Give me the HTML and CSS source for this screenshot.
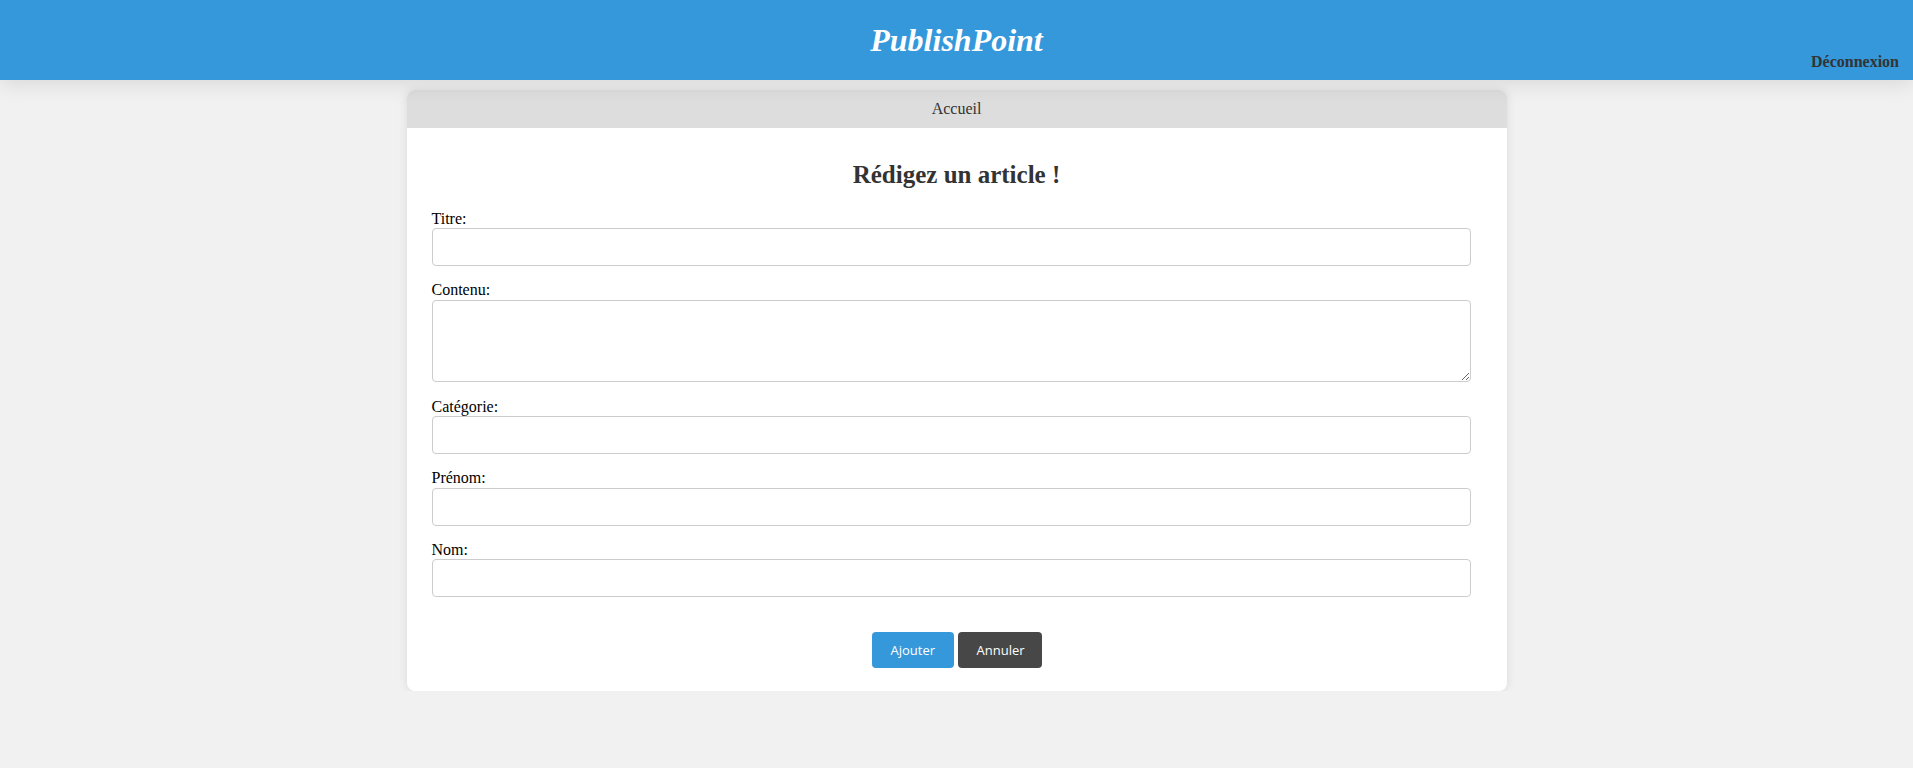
FILE: index.html
```html
<!DOCTYPE html>
<html lang="fr">
<head>
<meta charset="utf-8">
<title>PublishPoint</title>
<link rel="stylesheet" href="styles.css">
</head>
<body>
<header class="site-header">
  <div class="spacer"></div>
  <h1 class="brand">PublishPoint</h1>
  <a class="logout" href="#">Déconnexion</a>
</header>
<main class="card">
  <nav class="card-nav"><a href="#">Accueil</a></nav>
  <div class="card-body">
    <h2 class="card-title">Rédigez un article !</h2>
    <form class="article-form">
      <label for="titre">Titre:</label>
      <input id="titre" type="text">
      <label for="contenu">Contenu:</label>
      <textarea id="contenu"></textarea>
      <label for="categorie">Catégorie:</label>
      <input id="categorie" type="text">
      <label for="prenom">Prénom:</label>
      <input id="prenom" type="text">
      <label for="nom">Nom:</label>
      <input id="nom" type="text">
      <div class="actions">
        <button type="button" class="btn btn-primary">Ajouter</button>
        <button type="button" class="btn btn-dark">Annuler</button>
      </div>
    </form>
  </div>
</main>
</body>
</html>
```

FILE: styles.css
```css
html, body {
  margin: 0;
  padding: 0;
}
body {
  background: #f1f1f1;
  font-family: "Liberation Serif", "Times New Roman", serif;
  font-size: 16px;
  color: #000;
}
.site-header {
  position: relative;
  z-index: 1;
  height: 80px;
  background: #3498db;
  display: grid;
  grid-template-columns: 1fr auto 1fr;
  box-shadow: 0 4px 20px rgba(0, 0, 0, 0.1);
}
.brand {
  align-self: center;
  margin: 0;
  font-size: 32px;
  font-style: italic;
  font-weight: bold;
  color: #fff;
}
.logout {
  justify-self: end;
  align-self: end;
  padding: 0 14px 9px 0;
  font-weight: bold;
  color: #333;
  text-decoration: none;
}
.card {
  display: block;
  width: 1100px;
  margin: 10px auto 0;
  background: #fff;
  border-radius: 8px;
  overflow: hidden;
  box-shadow: 0 0 10px rgba(0, 0, 0, 0.1);
}
.card-nav {
  height: 38px;
  background: #ddd;
  display: flex;
  align-items: center;
  justify-content: center;
}
.card-nav a {
  color: #333;
  text-decoration: none;
}
.card-body {
  padding: 14px 25px 23px;
}
.card-title {
  margin: 19px 0 21px;
  text-align: center;
  font-size: 25px;
  font-weight: bold;
  color: #333;
}
.article-form {
  display: flex;
  flex-direction: column;
  align-items: flex-start;
}
.article-form label {
  display: block;
  line-height: 18.4px;
}
.article-form input,
.article-form textarea {
  display: block;
  box-sizing: border-box;
  width: 99%;
  height: 38px;
  margin: 0 0 15px;
  padding: 10px;
  border: 1px solid #ccc;
  border-radius: 4px;
  font-family: "Liberation Sans", Arial, sans-serif;
  font-size: 13px;
  background: #fff;
}
.article-form textarea {
  height: 82px;
  margin-bottom: 16px;
}
.actions {
  align-self: stretch;
  display: flex;
  justify-content: center;
  gap: 4px;
  margin-top: 20px;
}
.btn {
  box-sizing: border-box;
  height: 36px;
  padding: 0 19px;
  border: none;
  border-radius: 4px;
  font-family: "Open Sans", "Liberation Sans", Arial, sans-serif;
  font-size: 13px;
  color: #fff;
  cursor: pointer;
}
.btn-primary {
  background: #3498db;
  width: 82px;
}
.btn-dark {
  background: #474747;
  width: 84px;
}
```
